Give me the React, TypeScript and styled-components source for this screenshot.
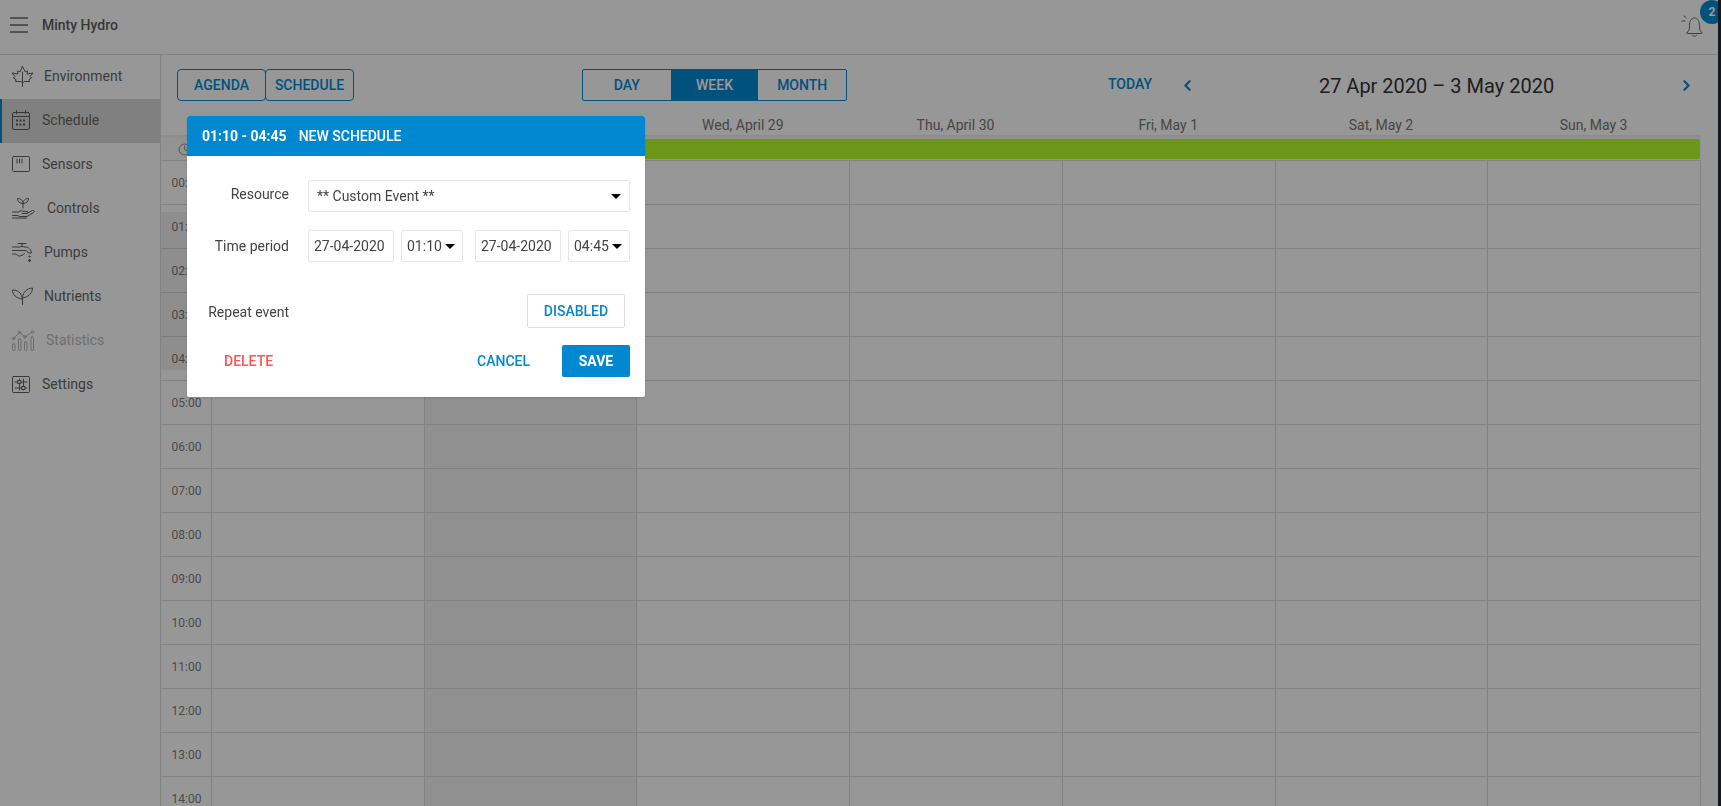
import React from "react";
import styled, { createGlobalStyle } from "styled-components";
import { ChevronLeft, ChevronRight, Clock } from "lucide-react";

const PRIMARY = "#0288d1";
const ROW = 44;

const Global = createGlobalStyle`
  html, body { margin: 0; height: 100%; overflow: hidden; background: #fff; }
  #root { height: 100%; }
  * { box-sizing: border-box; }
  body { font-family: Roboto, "Liberation Sans", sans-serif; font-size: 14px; color: #555; }
`;

const Page = styled.div`
  display: flex;
  height: 806px;
  width: 1721px;
  overflow: hidden;
`;
const Main = styled.div`
  width: 1718px;
  display: flex;
  flex-direction: column;
  overflow: hidden;
  background: #fcfcfc;
`;
const EdgeStrip = styled.div`
  width: 3px;
  background: #232838;
`;
const TopBar = styled.header`
  height: 55px;
  flex: none;
  display: flex;
  align-items: center;
  padding-left: 9px;
  border-bottom: 1px solid #d9d9d9;
`;
const MenuGlyph = styled.svg`
  width: 20px;
  height: 20px;
  margin-right: 13px;
  margin-top: -4px;
  stroke: #666;
  stroke-width: 1.6;
`;
const Brand = styled.span`
  font-size: 14px;
  font-weight: 500;
  color: #5c5c5c;
  margin-top: -5px;
`;
const BellWrap = styled.div`
  margin-left: auto;
  margin-right: 13px;
  margin-top: -5px;
  width: 24px;
  height: 24px;
  position: relative;
`;
const BellGlyph = styled.svg`
  width: 24px;
  height: 24px;
  fill: none;
  stroke: #6a6a6a;
  stroke-width: 1;
  stroke-linecap: round;
  stroke-linejoin: round;
`;
const Badge = styled.span`
  position: absolute;
  left: 19px;
  top: -13px;
  width: 24px;
  height: 24px;
  border-radius: 50%;
  background: ${PRIMARY};
  color: #fff;
  font-size: 12px;
  font-weight: 700;
  display: flex;
  justify-content: center;
  align-items: center;
`;
const Content = styled.div`
  flex: 1;
  display: flex;
  min-height: 0;
`;
const Sidebar = styled.nav`
  width: 161px;
  flex: none;
  border-right: 1px solid #d9d9d9;
`;
const NavItem = styled.div<{ $active?: boolean; $disabled?: boolean }>`
  height: 44px;
  display: flex;
  align-items: center;
  padding: 0 0 2px 12px;
  font-size: 14px;
  color: #666;
  background: ${(p) => (p.$active ? "#d6d6d6" : "transparent")};
  box-shadow: ${(p) => (p.$active ? `inset 2px 0 0 ${PRIMARY}` : "none")};
  opacity: ${(p) => (p.$disabled ? 0.45 : 1)};
`;
const NavIconSlot = styled.span<{ $w: number }>`
  width: ${(p) => p.$w}px;
  flex: none;
  display: flex;
  align-items: center;
`;
const NavGlyph = styled.svg`
  fill: none;
  stroke: #5e5e5e;
  stroke-width: 1;
  stroke-linecap: round;
  stroke-linejoin: round;
  overflow: visible;
`;
const Calendar = styled.section`
  flex: 1;
  min-width: 0;
  display: flex;
  flex-direction: column;
  padding-right: 17px;
`;
const Toolbar = styled.div`
  height: 61px;
  flex: none;
  display: flex;
  align-items: flex-start;
  padding: 14px 20px 0 16px;
  margin-right: -17px;
`;
const OutlineButton = styled.button`
  width: 89px;
  height: 32px;
  padding: 0;
  background: transparent;
  border: 1px solid ${PRIMARY};
  border-radius: 4px;
  color: ${PRIMARY};
  font: 500 14px Roboto, sans-serif;
  & + & { margin-left: -1px; }
`;
const ViewSwitch = styled.div`
  display: flex;
  height: 32px;
  width: 265px;
  margin-left: 228px;
  border: 1px solid ${PRIMARY};
  border-radius: 2px;
`;
const ViewOption = styled.div<{ $on?: boolean }>`
  flex: 1;
  display: flex;
  align-items: center;
  justify-content: center;
  font-weight: 500;
  font-size: 14px;
  color: ${(p) => (p.$on ? "#fff" : PRIMARY)};
  background: ${(p) => (p.$on ? PRIMARY : "transparent")};
`;
const DateNav = styled.div`
  margin-left: auto;
  width: 590px;
  height: 32px;
  display: flex;
  align-items: center;
`;
const TodayLink = styled.span`
  color: ${PRIMARY};
  font-weight: 500;
  font-size: 14px;
  margin-right: 23px;
  margin-top: -2px;
`;
const Chevron = styled.span`
  width: 24px;
  display: flex;
  justify-content: center;
  color: ${PRIMARY};
`;
const RangeTitle = styled.h2`
  flex: 1;
  margin: 2px 0 0;
  text-align: center;
  font-size: 20px;
  font-weight: 400;
  color: #333;
`;
const GridRow = styled.div`
  display: grid;
  grid-template-columns: 51px repeat(7, minmax(0, 1fr));
  flex: none;
`;
const HeaderRow = styled(GridRow)`
  height: 19px;
`;
const DayTitle = styled.div`
  text-align: center;
  font-size: 14px;
  line-height: 19px;
  color: #757575;
  padding-right: 2px;
`;
const AllDayRow = styled(GridRow)`
  height: 26px;
  border-bottom: 1px solid #d9d9d9;
  background: linear-gradient(#e8e8e8, #f4f4f4 4px, #f7f7f7);
  padding-top: 4px;
`;
const AllDayIcon = styled.span`
  color: #777;
  padding-left: 17px;
  display: flex;
  align-items: center;
  height: 20px;
`;
const EventBar = styled.div`
  grid-column: 2 / -1;
  height: 20px;
  background: #b2fd2a;
  border-radius: 2px;
  margin-right: 1px;
`;
const Columns = styled(GridRow)`
  flex: 1;
  min-height: 0;
  overflow: hidden;
  align-items: start;
`;
const Column = styled.div<{ $shaded?: boolean }>`
  position: relative;
  background: ${(p) => (p.$shaded ? "rgba(0,0,0,.045)" : "transparent")};
`;
const TimeCell = styled.div`
  height: ${ROW}px;
  display: flex;
  align-items: center;
  justify-content: center;
  font-size: 12px;
  color: #7c7c7c;
  border-right: 1px solid #d9d9d9;
  border-bottom: 1px solid #d9d9d9;
  padding-left: 1px;
`;
const DayCell = styled.div`
  height: ${ROW}px;
  border-right: 1px solid #d9d9d9;
  border-bottom: 1px solid #d9d9d9;
`;
const Selection = styled.div`
  position: absolute;
  left: 0;
  right: 0;
  background: rgba(0, 0, 0, 0.06);
`;
const Overlay = styled.div`
  position: fixed;
  inset: 0;
  background: rgba(0, 0, 0, 0.4);
`;
const Dialog = styled.div`
  position: fixed;
  left: 187px;
  top: 116px;
  width: 458px;
  background: #fff;
  border-radius: 2px;
  overflow: hidden;
  box-shadow: 0 1px 3px rgba(0, 0, 0, 0.12);
`;
const DialogHead = styled.div`
  height: 40px;
  background: ${PRIMARY};
  color: #fff;
  display: flex;
  align-items: center;
  padding-left: 15px;
  font-size: 14px;
`;
const HeadTime = styled.span`
  font-weight: 700;
  margin-right: 12px;
`;
const HeadName = styled.span`
  font-weight: 500;
`;
const DialogBody = styled.div`
  padding: 24px 15px 20px 0;
`;
const FormRow = styled.div<{ $top?: number }>`
  display: flex;
  align-items: center;
  margin-top: ${(p) => p.$top ?? 0}px;
`;
const FieldLabel = styled.label<{ $shift?: number }>`
  width: 102px;
  flex: none;
  text-align: right;
  margin-right: 19px;
  font-size: 14px;
  color: #444;
  margin-top: ${(p) => p.$shift ?? 0}px;
`;
const FieldBox = styled.div<{ $w?: number; $gap?: number }>`
  height: 32px;
  width: ${(p) => (p.$w ? `${p.$w}px` : "auto")};
  flex: ${(p) => (p.$w ? "none" : 1)};
  margin-left: ${(p) => p.$gap ?? 0}px;
  display: flex;
  align-items: center;
  gap: 3px;
  border: 1px solid #e6e6e6;
  border-radius: 2px;
  padding: 0 5px;
  font-size: 14px;
  color: #444;
`;
const ResourceBox = styled(FieldBox)`
  padding: 0 8px;
  justify-content: space-between;
`;
const Caret = styled.i`
  width: 0;
  height: 0;
  border-left: 5px solid transparent;
  border-right: 5px solid transparent;
  border-top: 5px solid #000;
`;
const RepeatButton = styled.button`
  margin-left: auto;
  margin-right: 5px;
  width: 98px;
  height: 34px;
  padding: 0;
  background: #fff;
  border: 1px solid #e0e0e0;
  border-radius: 2px;
  color: ${PRIMARY};
  font: 500 14px Roboto, sans-serif;
`;
const Footer = styled.div`
  display: flex;
  align-items: center;
  margin-top: 17px;
  padding-left: 17px;
`;
const TextButton = styled.button<{ $danger?: boolean }>`
  height: 32px;
  padding: 0 20px;
  background: none;
  border: 0;
  color: ${(p) => (p.$danger ? "#ff5252" : PRIMARY)};
  font: 500 14px Roboto, sans-serif;
`;
const SaveButton = styled.button`
  width: 68px;
  height: 32px;
  margin-left: 12px;
  padding: 0;
  background: ${PRIMARY};
  border: 0;
  border-radius: 2px;
  color: #fff;
  font: 700 14px Roboto, sans-serif;
`;
const Spacer = styled.span`
  flex: 1;
`;

const days = ["Mon, April 27", "Tue, April 28", "Wed, April 29", "Thu, April 30", "Fri, May 1", "Sat, May 2", "Sun, May 3"];
const hours = Array.from({ length: 15 }, (_, i) => `${String(i).padStart(2, "0")}:00`);
const selTop = ROW * (1 + 10 / 60);
const selHeight = ROW * (4 + 45 / 60) - selTop;

const Leaf = () => (
  <NavGlyph width="21" height="21" viewBox="0 0 21 21">
    <path d="M10.500.5L13 5.500 15.500 5 15 8l6-1-3 3.500 1.500 1.500-2.500 1.500.5 2H12L10.500 17 9 15.500H3.500l.5-2L1.500 12 3 10.500 0 7l6 1-.5-3L8 5.500z" />
    <path d="M10.500 6v14.500" />
  </NavGlyph>
);
const CalendarGlyph = () => (
  <NavGlyph width="18" height="20" viewBox="0 0 18 20">
    <rect x=".5" y="2.500" width="17" height="17" rx="1.500" />
    <path d="M.5 6.500h17M4.500.5v3M13.500.5v3" />
    <path strokeWidth="2" strokeLinecap="butt" strokeDasharray="2 1.500" d="M4 10.500h10M4 14.500h10" />
  </NavGlyph>
);
const SensorGlyph = () => (
  <NavGlyph width="18" height="16" viewBox="0 0 18 16">
    <rect x=".5" y=".5" width="17" height="15" rx="1" />
    <path d="M5 3v4M7.500 3v4M10 3v4" />
  </NavGlyph>
);
const HandGlyph = () => (
  <NavGlyph width="23" height="22" viewBox="0 0 23 22">
    <path d="M11 11V6.500M11 6.500C8 6.500 5.500 5 5.500 1.500 8.500 1.500 11 3 11 6.500zM11 6.500c3 0 5.500-1.500 5.500-5-3 0-5.500 1.500-5.500 5z" />
    <path d="M.5 15h6c1.500-1.500 4-1.500 5.500-.5h3c1.500 0 1.500 2 0 2H10M15.500 16l5-2.500c1.500-.5 2.500 1 1 2L15 19.500H8L5.500 18.500H.5M.5 21h14" />
  </NavGlyph>
);
const TapGlyph = () => (
  <NavGlyph width="21" height="20" viewBox="0 0 21 20">
    <path d="M6 1.500h8M10 1.500v3M.5 5h6.500c1 0 2-.5 3-.5s2 .5 3 .5c3.500 0 6 2 6.500 6h-3c-.5-1.500-2-2.500-3.500-2.500H.5M.5 12h3c1 0 2 2 4 2s4-1.500 5-2.500" />
    <circle cx="17.500" cy="14.500" r=".6" />
    <circle cx="17.500" cy="18.500" r="1" fill="#5e5e5e" />
  </NavGlyph>
);
const SproutGlyph = () => (
  <NavGlyph width="21" height="18" viewBox="0 0 21 18">
    <path d="M10 10C9 5.500 5.500 3 .5 3c0 5 3.500 8 9.500 9M10.500 10C11 5 15 1.500 20.500 1c0 5-4.500 9.500-10 10M10.500 10v7.500" />
  </NavGlyph>
);
const StatsGlyph = () => (
  <NavGlyph width="23" height="21" viewBox="0 0 23 21">
    <path d="M1 9l6.500-6.500L13 7l7-5" />
    <circle cx="1.500" cy="8.500" r="1.300" />
    <circle cx="7.500" cy="2.500" r="1.300" />
    <circle cx="13" cy="7" r="1.300" />
    <circle cx="20.500" cy="2" r="1.300" />
    <rect x=".5" y="14" width="2.500" height="6.500" rx=".8" />
    <rect x="6.500" y="9" width="2.500" height="11.500" rx=".8" />
    <rect x="12.500" y="12" width="2.500" height="8.500" rx=".8" />
    <rect x="19" y="7" width="2.500" height="13.500" rx=".8" />
  </NavGlyph>
);
const SlidersGlyph = () => (
  <NavGlyph width="18" height="17" viewBox="0 0 18 17">
    <rect x=".5" y=".5" width="17" height="16" rx="1" />
    <path d="M3 6h3M9 6h6M3 12h7M13 12h2M7.500 3v1.500M7.500 7.500V14M11.500 3v7M11.500 13.500v.5" />
    <rect x="6" y="4.500" width="3" height="3" />
    <rect x="10" y="10.500" width="3" height="3" />
  </NavGlyph>
);

const nav = [
  { label: "Environment", w: 32, icon: <Leaf /> },
  { label: "Schedule", w: 30, icon: <CalendarGlyph />, active: true },
  { label: "Sensors", w: 30, icon: <SensorGlyph /> },
  { label: "Controls", w: 35, icon: <HandGlyph /> },
  { label: "Pumps", w: 32, icon: <TapGlyph /> },
  { label: "Nutrients", w: 32, icon: <SproutGlyph /> },
  { label: "Statistics", w: 34, icon: <StatsGlyph />, disabled: true },
  { label: "Settings", w: 30, icon: <SlidersGlyph /> },
];

export default function App() {
  return (
    <Page>
      <Global />
      <Main>
        <TopBar>
          <MenuGlyph viewBox="0 0 20 20">
            <path d="M1 3h18M1 10h18M1 17h18" />
          </MenuGlyph>
          <Brand>Minty Hydro</Brand>
          <BellWrap>
            <BellGlyph viewBox="0 0 24 24">
              <path d="M6 19.500c2-1 2.500-3 2.500-7 0-4 1.500-7.500 5-7.500s5 3.500 5 7.500c0 4 .5 6 2.500 7 .5.500 0 1-.5 1H6.500c-.5 0-1-.5-.5-1z" />
              <path d="M11.500 22.500c1 1 3 1 4 0" />
              <path d="M1 8h3M3 3l2 1.500" />
            </BellGlyph>
            <Badge>2</Badge>
          </BellWrap>
        </TopBar>
        <Content>
          <Sidebar>
            {nav.map((n) => (
              <NavItem key={n.label} $active={n.active} $disabled={n.disabled}>
                <NavIconSlot $w={n.w}>{n.icon}</NavIconSlot>
                {n.label}
              </NavItem>
            ))}
          </Sidebar>
          <Calendar>
            <Toolbar>
              <OutlineButton>AGENDA</OutlineButton>
              <OutlineButton>SCHEDULE</OutlineButton>
              <ViewSwitch>
                <ViewOption>DAY</ViewOption>
                <ViewOption $on>WEEK</ViewOption>
                <ViewOption>MONTH</ViewOption>
              </ViewSwitch>
              <DateNav>
                <TodayLink>TODAY</TodayLink>
                <Chevron>
                  <ChevronLeft size={17} strokeWidth={3} />
                </Chevron>
                <RangeTitle>27 Apr 2020 – 3 May 2020</RangeTitle>
                <Chevron>
                  <ChevronRight size={17} strokeWidth={3} />
                </Chevron>
              </DateNav>
            </Toolbar>
            <HeaderRow>
              <span />
              {days.map((d) => (
                <DayTitle key={d}>{d}</DayTitle>
              ))}
            </HeaderRow>
            <AllDayRow>
              <AllDayIcon>
                <Clock size={13} strokeWidth={1.5} />
              </AllDayIcon>
              <EventBar />
            </AllDayRow>
            <Columns>
              <Column>
                <Selection style={{ top: selTop, height: selHeight }} />
                {hours.map((h) => (
                  <TimeCell key={h}>{h}</TimeCell>
                ))}
              </Column>
              {days.map((d, i) => (
                <Column key={d} $shaded={i === 1}>
                  {i === 0 && <Selection style={{ top: selTop, height: selHeight }} />}
                  {hours.map((h) => (
                    <DayCell key={h} />
                  ))}
                </Column>
              ))}
            </Columns>
          </Calendar>
        </Content>
      </Main>
      <EdgeStrip />
      <Overlay />
      <Dialog>
        <DialogHead>
          <HeadTime>01:10 - 04:45</HeadTime>
          <HeadName>NEW SCHEDULE</HeadName>
        </DialogHead>
        <DialogBody>
          <FormRow>
            <FieldLabel $shift={-4}>Resource</FieldLabel>
            <ResourceBox>
              ** Custom Event **
              <Caret />
            </ResourceBox>
          </FormRow>
          <FormRow $top={18}>
            <FieldLabel>Time period</FieldLabel>
            <FieldBox $w={86}>27-04-2020</FieldBox>
            <FieldBox $w={62} $gap={7}>
              01:10
              <Caret />
            </FieldBox>
            <FieldBox $w={86} $gap={12}>27-04-2020</FieldBox>
            <FieldBox $w={62} $gap={7}>
              04:45
              <Caret />
            </FieldBox>
          </FormRow>
          <FormRow $top={32}>
            <FieldLabel $shift={2}>Repeat event</FieldLabel>
            <RepeatButton>DISABLED</RepeatButton>
          </FormRow>
          <Footer>
            <TextButton $danger>DELETE</TextButton>
            <Spacer />
            <TextButton>CANCEL</TextButton>
            <SaveButton>SAVE</SaveButton>
          </Footer>
        </DialogBody>
      </Dialog>
    </Page>
  );
}
